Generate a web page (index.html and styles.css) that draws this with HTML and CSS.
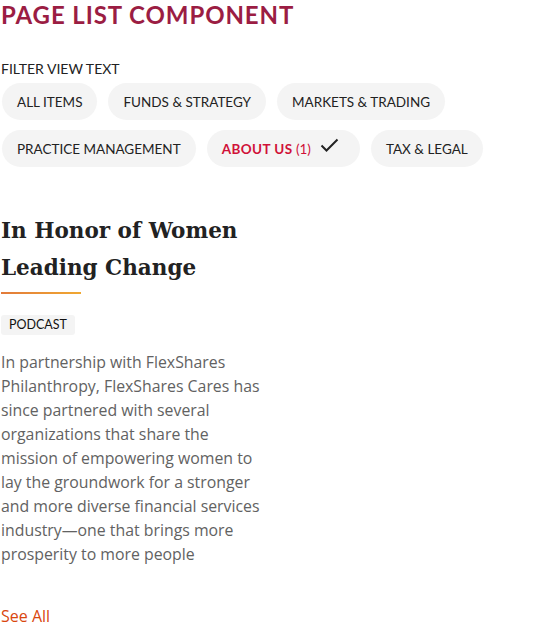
FILE: index.html
```html
<!DOCTYPE html>
<html>
<head>
<meta charset="utf-8">
<link rel="stylesheet" href="styles.css">
</head>
<body>
<main class="page">
  <h1 class="title">PAGE LIST COMPONENT</h1>
  <div class="filter-label">FILTER VIEW TEXT</div>
  <div class="chips">
    <span class="chip">ALL ITEMS</span>
    <span class="chip">FUNDS &amp; STRATEGY</span>
    <span class="chip">MARKETS &amp; TRADING</span>
    <span class="chip">PRACTICE MANAGEMENT</span>
    <span class="chip chip-active"><b>ABOUT US</b>&nbsp;(1)
      <svg class="check" width="19" height="14" viewBox="0 0 19 14"><path d="M1.5 7.5 L6.5 12.5 L17.5 1.5" fill="none" stroke="#222" stroke-width="2"/></svg>
    </span>
    <span class="chip">TAX &amp; LEGAL</span>
  </div>
  <article class="card">
    <h2 class="card-title">In Honor of Women Leading Change</h2>
    <div class="rule"></div>
    <span class="tag">PODCAST</span>
    <p class="desc">In partnership with FlexShares Philanthropy, FlexShares Cares has since partnered with several organizations that share the mission of empowering women to lay the groundwork for a stronger and more diverse financial services industry—one that brings more prosperity to more people</p>
  </article>
  <a class="see-all" href="#">See All</a>
</main>
</body>
</html>
```
FILE: styles.css
```css
html, body {
  margin: 0;
  padding: 0;
  background: #fff;
}
body {
  font-family: Lato, "Open Sans", sans-serif;
}
.page {
  padding: 0 0 0 1px;
}
.title {
  margin: 0;
  padding-top: 1px;
  font-size: 24px;
  line-height: 28px;
  font-weight: 700;
  letter-spacing: 0.9px;
  color: #9b1d43;
}
.filter-label {
  margin-top: 31px;
  font-size: 14px;
  line-height: 17px;
  color: #222;
}
.chips {
  margin-top: 6px;
  display: flex;
  flex-wrap: wrap;
  gap: 10px 11px;
  width: 500px;
  padding-left: 1px;
}
.chip {
  display: inline-flex;
  align-items: center;
  height: 37px;
  padding: 0 15px;
  border-radius: 19px;
  background: #f4f4f4;
  font-size: 13.5px;
  color: #222;
}
.chip-active {
  color: #d01138;
  padding-left: 15px;
  padding-right: 21px;
}
.chip-active b {
  font-weight: 700;
  letter-spacing: 0.4px;
}
.check {
  margin-left: 9px;
  margin-top: -8px;
}
.card {
  margin-top: 45px;
  width: 268px;
}
.card-title {
  margin: 0;
  font-family: "DejaVu Serif", serif;
  font-weight: 700;
  font-size: 21.5px;
  line-height: 37px;
  color: #222;
}
.rule {
  margin-top: 6px;
  width: 80px;
  height: 2px;
  background: linear-gradient(90deg, #e27a3a, #f0a832);
}
.tag {
  display: inline-block;
  margin-top: 21px;
  padding: 2px 8px;
  border-radius: 3px;
  background: #f4f4f4;
  font-size: 12.5px;
  line-height: 16px;
  color: #111;
}
.desc {
  margin: 15px 0 0;
  font-family: "Open Sans", sans-serif;
  font-size: 15.85px;
  line-height: 24px;
  color: #626262;
}
.see-all {
  display: inline-block;
  margin-top: 39px;
  font-family: "Open Sans", sans-serif;
  font-size: 16px;
  color: #d9470e;
  text-decoration: none;
}
```
